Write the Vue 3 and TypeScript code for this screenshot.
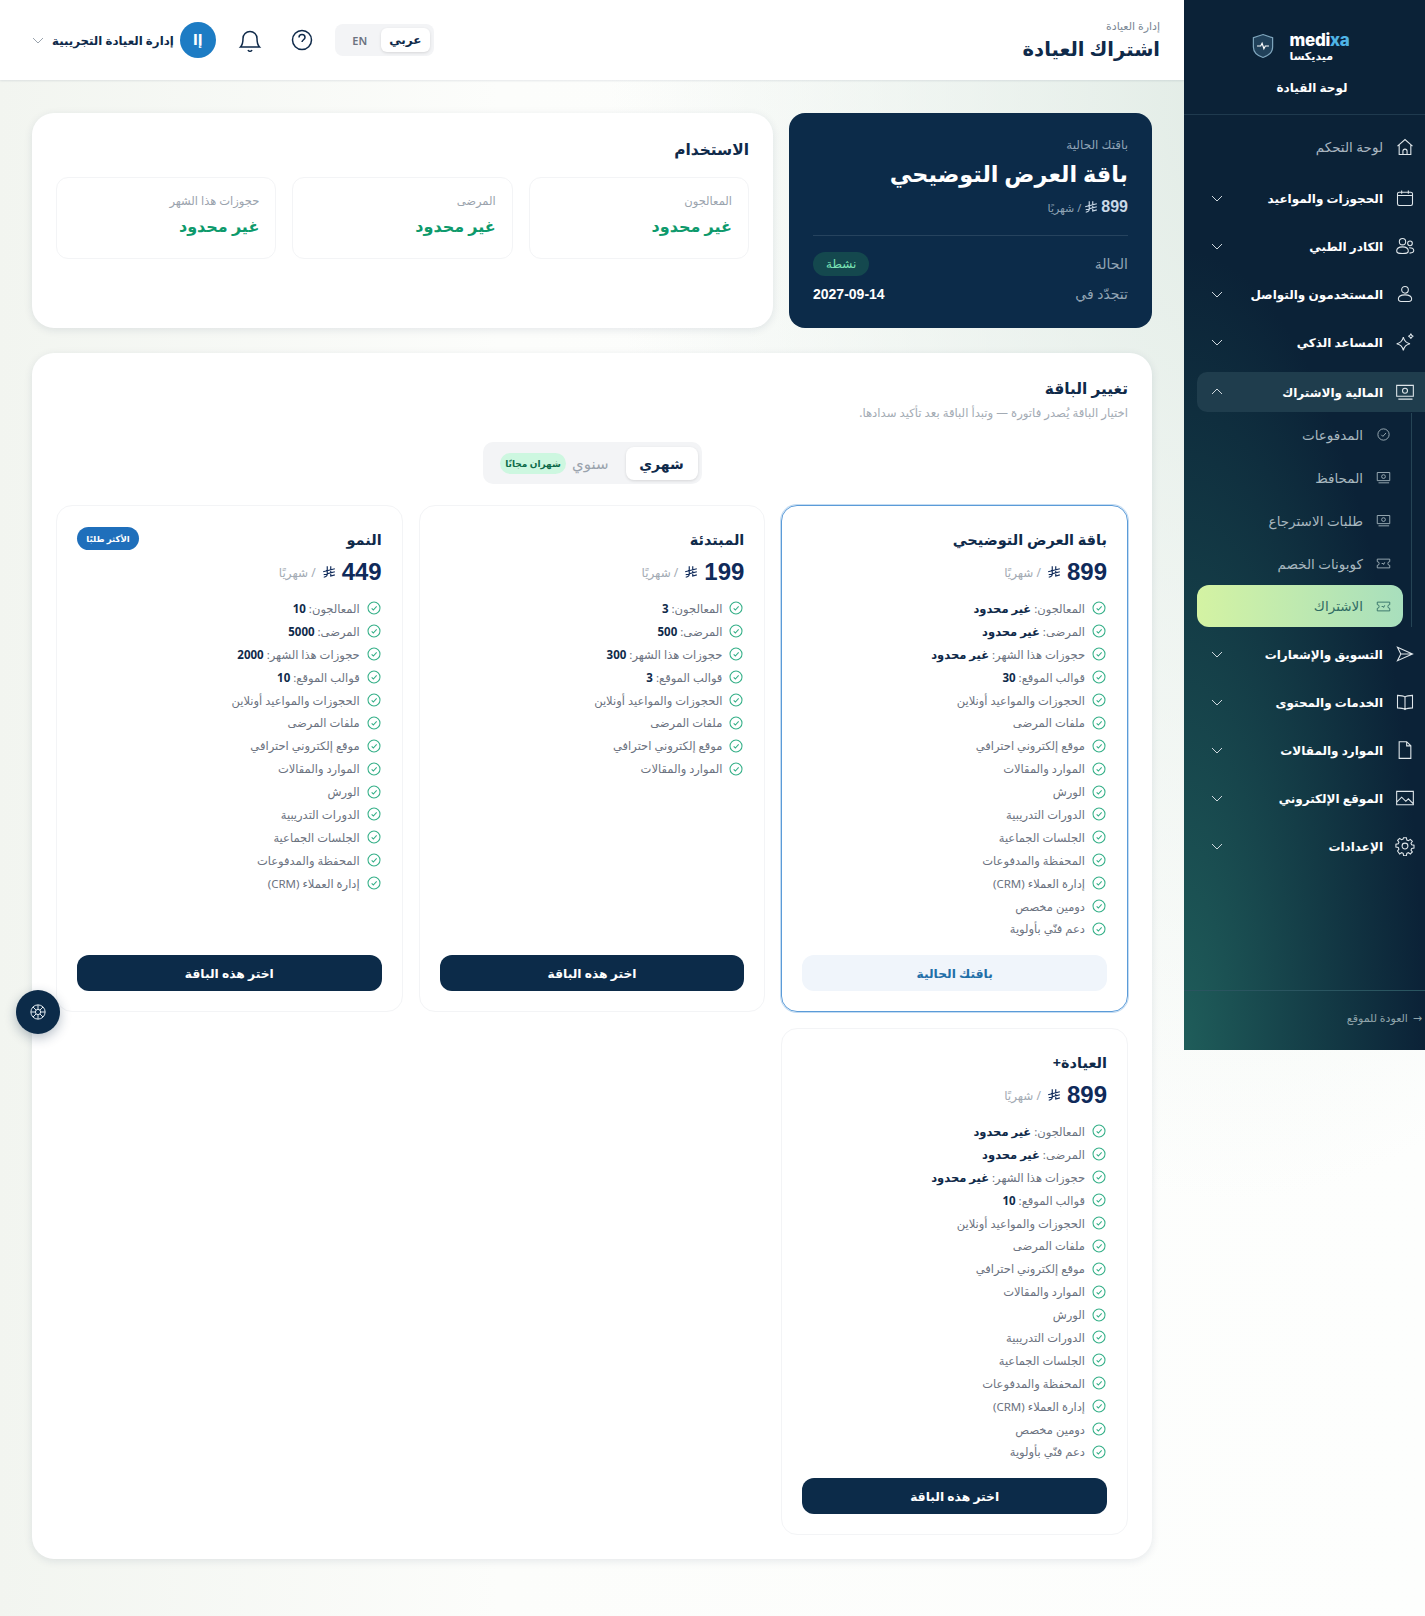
<script setup lang="ts">
import { computed } from "vue";

type NavItem = { label: string; icon: string; chevron?: boolean; plain?: boolean };

const icons: Record<string, string> = {
  home: "M3 11 12 3l9 8M5 9.500V21h14V9.500M9.500 21v-4a2.500 2.500 0 0 1 5 0v4",
  calendar: "M3 7a2 2 0 0 1 2-2h14a2 2 0 0 1 2 2v12a2 2 0 0 1-2 2H5a2 2 0 0 1-2-2zM3 9h18M8 3v4M16 3v4",
  team: "M9 3a3.800 3.800 0 1 1 0 7.600A3.800 3.800 0 0 1 9 3zM18 6a2.800 2.800 0 1 1 0 5.600A2.800 2.800 0 0 1 18 6zM2 18c0-3 3-5 7-5s7 2 7 5-3 3-7 3-7 0-7-3zM17 14c3 0 5.500 1.300 5.500 3.500S20 20.500 17.500 20.500",
  user: "M12 3a4 4 0 1 1 0 8 4 4 0 0 1 0-8zM4 18c0-3.500 3.500-5 8-5s8 1.500 8 5-3.500 3-8 3-8 .5-8-3z",
  spark: "M10 6c1 5 3 7 8 8-5 1-7 3-8 8-1-5-3-7-8-8 5-1 7-3 8-8zM19 2c.4 2 1 2.600 3 3-2 .4-2.600 1-3 3-.4-2-1-2.600-3-3 2-.4 2.600-1 3-3z",
  money: "M2 4h20v13H2zM12 7.500a3 3 0 1 1 0 6 3 3 0 0 1 0-6zM5.500 10.500h.01M18.500 10.500h.01M4 20.500h17",
  check: "M12 3a9 9 0 1 1 0 18 9 9 0 0 1 0-18zM8.500 12.500l2.500 2.500 5-5.500",
  ticket: "M2 5h20v4a3 3 0 0 0 0 6v4H2v-4a3 3 0 0 0 0-6zM9 12h3M14 10l-2 4",
  send: "M3 4l18 8-18 8 4-8zM7 12h14",
  book: "M12 6c-2-1.500-5-2-9-2v15c4 0 7 .5 9 2 2-1.500 5-2 9-2V4c-4 0-7 .5-9 2zM12 6v15",
  file: "M5 2h9l5 5v15H5zM14 2v5h5",
  image: "M2 4h20v16H2zM2 17l6-6 5 5 3-3 6 6M16 8h.01",
  gear: "M12 8.500a3.500 3.500 0 1 1 0 7 3.500 3.500 0 0 1 0-7zM10.300 2h3.400l.5 2.800 1.900.8 2.300-1.600 2.400 2.400-1.600 2.300.8 1.900 2.800.5v3.400l-2.800.5-.8 1.900 1.600 2.300-2.400 2.400-2.300-1.600-1.900.8-.5 2.800h-3.400l-.5-2.800-1.900-.8-2.300 1.600L3.100 18l1.600-2.300-.8-1.900-2.800-.5V9.900l2.800-.5.8-1.900L3.100 5.200 5.500 2.800l2.300 1.600 1.900-.8z",
};
const riyalPath = "M9 2v14c0 2.500-2 4.500-6 5M15 2v17l7-2M2 11.500l20-5M3 16.500l19-5";

const navTop: NavItem[] = [
  { label: "لوحة التحكم", icon: "home", plain: true },
  { label: "الحجوزات والمواعيد", icon: "calendar", chevron: true },
  { label: "الكادر الطبي", icon: "team", chevron: true },
  { label: "المستخدمون والتواصل", icon: "user", chevron: true },
  { label: "المساعد الذكي", icon: "spark", chevron: true },
];
const subNav = [
  { label: "المدفوعات", icon: "check" },
  { label: "المحافظ", icon: "money" },
  { label: "طلبات الاسترجاع", icon: "money" },
  { label: "كوبونات الخصم", icon: "ticket" },
  { label: "الاشتراك", icon: "ticket", active: true },
];
const navBottom: NavItem[] = [
  { label: "التسويق والإشعارات", icon: "send", chevron: true },
  { label: "الخدمات والمحتوى", icon: "book", chevron: true },
  { label: "الموارد والمقالات", icon: "file", chevron: true },
  { label: "الموقع الإلكتروني", icon: "image", chevron: true },
  { label: "الإعدادات", icon: "gear", chevron: true },
];

const usage = ["المعالجون", "المرضى", "حجوزات هذا الشهر"];

const base = [
  "الحجوزات والمواعيد أونلاين",
  "ملفات المرضى",
  "موقع إلكتروني احترافي",
  "الموارد والمقالات",
];
const more = ["الورش", "الدورات التدريبية", "الجلسات الجماعية", "المحفظة والمدفوعات", "إدارة العملاء (CRM)"];
const top = ["دومين مخصص", "دعم فنّي بأولوية"];

function limits(a: string, b: string, c: string, d: string) {
  return [
    { label: "المعالجون:", value: a },
    { label: "المرضى:", value: b },
    { label: "حجوزات هذا الشهر:", value: c },
    { label: "قوالب الموقع:", value: d },
  ];
}
const un = "غير محدود";
const plans = computed(() => [
  { name: "باقة العرض التوضيحي", price: 899, mine: true, limits: limits(un, un, un, "30"), features: [...base, ...more, ...top] },
  { name: "المبتدئة", price: 199, limits: limits("3", "500", "300", "3"), features: base },
  { name: "النمو", price: 449, popular: true, limits: limits("10", "5000", "2000", "10"), features: [...base, ...more] },
  { name: "العيادة+", price: 899, limits: limits(un, un, un, "10"), features: [...base, ...more, ...top] },
]);
</script>

<template>
  <div class="page" dir="rtl">
    <aside class="sidebar">
      <div class="brand">
        <div class="logo" dir="ltr">
          <svg class="shield" viewBox="0 0 24 28" width="22" height="26">
            <path d="M12 1.500 22.500 5v10c0 6-4.500 9.500-10.500 11.500C6 24.500 1.500 21 1.500 15V5z" fill="#21415a" stroke="#7fa6bd" stroke-width="1.300" />
            <path d="M5.500 14h4l1.500-3 2 6 1.500-3h4" fill="none" stroke="#fff" stroke-width="1.300" />
          </svg>
          <div class="logo-text">
            <div class="logo-en">medi<span>xa</span></div>
            <div class="logo-ar">ميديكسا</div>
          </div>
        </div>
        <div class="brand-title">لوحة القيادة</div>
      </div>

      <nav class="nav">
        <div v-for="item in navTop" :key="item.label" class="nav-item" :class="{ plain: item.plain }">
          <svg class="nav-icon" viewBox="0 0 24 24"><path :d="icons[item.icon]" /></svg>
          <span class="nav-label">{{ item.label }}</span>
          <svg v-if="item.chevron" class="chev" viewBox="0 0 12 12"><path d="M1 4l5 5 5-5" /></svg>
        </div>
        <div class="nav-item open">
          <svg class="nav-icon" viewBox="0 0 24 24"><path :d="icons.money" /></svg>
          <span class="nav-label">المالية والاشتراك</span>
          <svg class="chev" viewBox="0 0 12 12"><path d="M1 8l5-5 5 5" /></svg>
        </div>
        <div class="sub">
          <div v-for="s in subNav" :key="s.label" class="sub-item" :class="{ active: s.active }">
            <svg class="sub-icon" viewBox="0 0 24 24"><path :d="icons[s.icon]" /></svg>
            <span>{{ s.label }}</span>
          </div>
        </div>
        <div v-for="item in navBottom" :key="item.label" class="nav-item">
          <svg class="nav-icon" viewBox="0 0 24 24"><path :d="icons[item.icon]" /></svg>
          <span class="nav-label">{{ item.label }}</span>
          <svg v-if="item.chevron" class="chev" viewBox="0 0 12 12"><path d="M1 4l5 5 5-5" /></svg>
        </div>
      </nav>

      <div class="back"><span class="arrow">→</span> العودة للموقع</div>
    </aside>

    <div class="main">
      <header class="topbar">
        <div class="heading">
          <div class="crumb">إدارة العيادة</div>
          <h1>اشتراك العيادة</h1>
        </div>
        <div class="tools">
          <div class="lang">
            <span class="lang-on">عربي</span>
            <span class="lang-off">EN</span>
          </div>
          <svg class="tool help" viewBox="0 0 24 24"><path d="M12 2.500a9.500 9.500 0 1 1 0 19 9.500 9.500 0 0 1 0-19zM9 9.500a3 3 0 0 1 6 0c0 2-3 2.500-3 4.500M12 17h.01" /></svg>
          <svg class="tool bell" viewBox="0 0 24 24"><path d="M2.500 19c2-2 2.500-4 2.500-8.500a7 7 0 0 1 14 0c0 4.500.5 6.500 2.500 8.500zM10 22a2.200 2.200 0 0 0 4 0" /></svg>
          <div class="account">
            <span class="avatar">إا</span>
            <span class="account-name">إدارة العيادة التجريبية</span>
            <svg class="account-chev" viewBox="0 0 12 12"><path d="M1 4l5 5 5-5" /></svg>
          </div>
        </div>
      </header>

      <main class="content">
        <div class="top-row">
          <section class="now">
            <div class="cur-label">باقتك الحالية</div>
            <div class="cur-name">باقة العرض التوضيحي</div>
            <div class="cur-price">
              <b>899</b>
              <svg class="riyal" viewBox="0 0 24 24"><path :d="riyalPath" /></svg>
              <span>/ شهريًا</span>
            </div>
            <div class="cur-row first"><span>الحالة</span><em class="badge">نشطة</em></div>
            <div class="cur-row"><span>تتجدّد في</span><b>2027-09-14</b></div>
          </section>
          <section class="usage">
            <h2>الاستخدام</h2>
            <div class="usage-grid">
              <div v-for="u in usage" :key="u" class="usage-box">
                <div class="usage-label">{{ u }}</div>
                <div class="usage-value">غير محدود</div>
              </div>
            </div>
          </section>
        </div>

        <section class="change">
          <h2>تغيير الباقة</h2>
          <p class="hint">اختيار الباقة يُصدر فاتورة — وتبدأ الباقة بعد تأكيد سدادها.</p>
          <div class="period-wrap">
            <div class="period">
              <span class="period-on">شهري</span>
              <span class="period-off">سنوي</span>
              <span class="free">شهران مجانًا</span>
            </div>
          </div>
          <div class="plans">
            <article v-for="p in plans" :key="p.name" class="plan" :class="{ mine: p.mine }">
              <span v-if="p.popular" class="popular">الأكثر طلبًا</span>
              <h3>{{ p.name }}</h3>
              <div class="price">
                <b>{{ p.price }}</b>
                <svg class="riyal" viewBox="0 0 24 24"><path :d="riyalPath" /></svg>
                <span>/ شهريًا</span>
              </div>
              <ul>
                <li v-for="l in p.limits" :key="l.label">
                  <svg class="tick" viewBox="0 0 24 24"><path :d="icons.check" /></svg>
                  <span>{{ l.label }} <b>{{ l.value }}</b></span>
                </li>
                <li v-for="f in p.features" :key="f">
                  <svg class="tick" viewBox="0 0 24 24"><path :d="icons.check" /></svg>
                  <span>{{ f }}</span>
                </li>
              </ul>
              <button :class="{ 'is-current': p.mine }">{{ p.mine ? "باقتك الحالية" : "اختر هذه الباقة" }}</button>
            </article>
          </div>
        </section>
      </main>
    </div>

    <div class="fab">
      <svg viewBox="0 0 24 24"><path d="M12 2.500a9.500 9.500 0 1 1 0 19 9.500 9.500 0 0 1 0-19zM12 8.500a3.500 3.500 0 1 1 0 7 3.500 3.500 0 0 1 0-7zM12 2.500v6M12 15.500v6M2.500 12h6M15.500 12h6M5.300 5.300l4.200 4.200M14.500 14.500l4.200 4.200M18.700 5.300l-4.200 4.200M9.500 14.500l-4.200 4.200" /></svg>
    </div>
  </div>
</template>

<style>
html,
body {
  margin: 0;
  padding: 0;
}
</style>

<style scoped>
* {
  box-sizing: border-box;
}
.page {
  position: relative;
  display: flex;
  align-items: flex-start;
  width: 1425px;
  height: 1616px;
  overflow: hidden;
  background:
    radial-gradient(ellipse 620px 1100px at 1230px 100px, #e2ece6 0%, rgba(226, 236, 230, 0) 100%),
    linear-gradient(90deg, #f2f5f0 0%, #fcfdfb 35%, #fdfefd 100%);
  font-family: "Noto Sans", "DejaVu Sans", sans-serif;
  color: #0f2a4a;
}

.sidebar {
  flex: 0 0 241px;
  height: 1050px;
  display: flex;
  flex-direction: column;
  background:
    radial-gradient(ellipse 240px 800px at 0 100%, #1f5d5a 0%, rgba(31, 93, 90, 0) 100%),
    #0b2237;
  color: #fff;
}
.brand {
  height: 115px;
  padding-top: 33px;
  border-bottom: 1px solid #1f3a4e;
  text-align: center;
}
.logo {
  display: flex;
  justify-content: center;
  gap: 16px;
  align-items: flex-start;
  padding-right: 8px;
}
.logo-en {
  font: 800 17px/15px "Inter", sans-serif;
  letter-spacing: -0.3px;
}
.logo-en span {
  color: #4fb4e6;
}
.logo-ar {
  margin-top: 2px;
  font-size: 11px;
  line-height: 12px;
  font-weight: 600;
  text-align: left;
}
.brand-title {
  margin-top: 17px;
  padding-left: 15px;
  font-size: 12px;
  font-weight: 700;
}
.nav {
  padding-top: 8px;
  flex: 1;
}
.nav-item {
  height: 48px;
  display: flex;
  align-items: center;
  padding: 0 10px 0 12px;
  gap: 12px;
  font-size: 12px;
  font-weight: 700;
}
.nav-item.plain {
  margin-bottom: 3px;
  font-size: 13.500px;
  font-weight: 400;
  color: #a9b6c0;
}
.nav-item.open {
  width: 228px;
  height: 40px;
  margin: 6px 0 1px auto;
  padding-left: 0;
  background: #1f3d4d;
  border-radius: 10px 0 0 10px;
}
.nav-item.open .chev {
  margin-left: 14px;
}
.nav-icon {
  width: 20px;
  height: 20px;
  flex: none;
  fill: none;
  stroke: #dfe6ea;
  stroke-width: 1.300;
}
.nav-label {
  flex: 1;
}
.chev {
  width: 12px;
  height: 12px;
  margin-left: 15px;
  fill: none;
  stroke: #cfd8de;
  stroke-width: 1;
}
.sub {
  width: 215px;
  margin: 0 13px 3px 13px;
  border-right: 1px solid #254455;
}
.sub-item {
  height: 43px;
  display: flex;
  align-items: center;
  gap: 13px;
  margin-right: 8px;
  padding-right: 12px;
  font-size: 13.500px;
  color: #a7b7bf;
}
.sub-item.active {
  width: 206px;
  height: 42px;
  border-radius: 12px;
  background: linear-gradient(90deg, #d4f3a3 0%, #a8dfbd 100%);
  color: #2f6b63;
}
.sub-icon {
  width: 15px;
  height: 15px;
  flex: none;
  fill: none;
  stroke: currentColor;
  stroke-width: 1.400;
}
.back {
  height: 60px;
  border-top: 1px solid #2a5560;
  padding: 19px 3px 0 0;
  font-size: 11px;
  color: #8fa4aa;
}
.arrow {
  margin-left: 2px;
}

.main {
  flex: 1;
  min-width: 0;
}
.topbar {
  height: 80px;
  display: flex;
  align-items: center;
  justify-content: space-between;
  padding: 0 24px 0 32px;
  background: #fff;
  box-shadow: 0 1px 2px rgba(15, 42, 74, 0.1);
}
.crumb {
  font-size: 11px;
  color: #7a8794;
}
h1 {
  margin: 2px 0 0;
  font-size: 19.500px;
  font-weight: 700;
}
.tools {
  display: flex;
  align-items: center;
}
.lang {
  display: flex;
  align-items: center;
  width: 99px;
  height: 32px;
  padding: 4px;
  border-radius: 8px;
  background: #f3f4f6;
  font-size: 12px;
}
.lang-on {
  width: 49px;
  height: 24px;
  line-height: 24px;
  text-align: center;
  background: #fff;
  border-radius: 6px;
  box-shadow: 0 1px 3px rgba(0, 0, 0, 0.12);
  font-weight: 600;
}
.lang-off {
  flex: 1;
  text-align: center;
  color: #6b7280;
  font-weight: 600;
  font-size: 11px;
}
.tool {
  width: 24px;
  height: 24px;
  fill: none;
  stroke: #0f2a4a;
  stroke-width: 1.500;
}
.tool.help {
  margin-right: 21px;
}
.tool.bell {
  margin-right: 28px;
}
.account {
  display: flex;
  align-items: center;
  gap: 6px;
  margin-right: 22px;
}
.avatar {
  width: 36px;
  height: 36px;
  border-radius: 50%;
  background: #1d7cc4;
  color: #fff;
  text-align: center;
  line-height: 36px;
  font-size: 14px;
  font-weight: 700;
}
.account-name {
  font-size: 11.800px;
  font-weight: 700;
}
.account-chev {
  width: 12px;
  height: 12px;
  margin-right: 2px;
  fill: none;
  stroke: #9aa3ad;
}

.content {
  padding: 33px 32px 0;
}
.top-row {
  display: grid;
  grid-template-columns: 363px 1fr;
  gap: 16px;
}
.now {
  height: 215px;
  padding: 23px 24px 24px;
  border-radius: 16px;
  background: #0c2b49;
  color: #fff;
}
.cur-label {
  font-size: 12px;
  color: #8fa3b5;
}
.cur-name {
  margin-top: 5px;
  font-size: 22.400px;
  font-weight: 700;
}
.cur-price {
  display: flex;
  align-items: center;
  gap: 3px;
  margin-top: 9px;
  padding-bottom: 19px;
  border-bottom: 1px solid #26435e;
  font-size: 11px;
  color: #8fa3b5;
}
.cur-price b {
  font: 700 16px "Liberation Sans", sans-serif;
  color: #c9d8e6;
}
.cur-price .riyal {
  width: 14px;
  height: 14px;
  stroke: #c9d8e6;
}
.cur-row {
  display: flex;
  justify-content: space-between;
  align-items: center;
  margin-top: 9px;
  height: 21px;
  font-size: 14px;
  color: #93a5b5;
}
.cur-row.first {
  margin-top: 17px;
}
.cur-row b {
  font: 700 14px "Liberation Sans", sans-serif;
  color: #fff;
}
.badge {
  padding: 3px 13px;
  font-size: 12px;
  line-height: 18px;
  font-style: normal;
  border-radius: 12px;
  background: #14484e;
  color: #7be3b5;
}
.usage {
  height: 215px;
  padding: 26px 24px 24px;
  border-radius: 22px;
  background: #fff;
  box-shadow: 0 2px 8px rgba(15, 42, 74, 0.1);
}
h2 {
  margin: 0;
  font-size: 15.400px;
  font-weight: 700;
}
.usage-grid {
  display: grid;
  grid-template-columns: repeat(3, 1fr);
  gap: 16px;
  margin-top: 17px;
}
.usage-box {
  height: 82px;
  padding: 15px 16px;
  border: 1px solid #f3f4f6;
  border-radius: 12px;
}
.usage-label {
  font-size: 11.500px;
  color: #9aa3ad;
}
.usage-value {
  margin-top: 7px;
  font-size: 16px;
  font-weight: 700;
  color: #0e9a6c;
}

.change {
  margin-top: 25px;
  padding: 25px 24px 24px;
  border-radius: 22px;
  background: #fff;
  box-shadow: 0 2px 8px rgba(15, 42, 74, 0.1);
}
.hint {
  margin: 5px 0 0;
  font-size: 11.700px;
  color: #a3abb4;
}
.period-wrap {
  display: flex;
  justify-content: center;
  margin-top: 22px;
}
.period {
  display: flex;
  align-items: center;
  width: 219px;
  height: 42px;
  padding: 4px;
  border-radius: 10px;
  background: #f3f4f6;
}
.period-on {
  width: 72px;
  height: 33px;
  line-height: 33px;
  text-align: center;
  background: #fff;
  border-radius: 8px;
  font-size: 14px;
  font-weight: 700;
  box-shadow: 0 1px 3px rgba(0, 0, 0, 0.12);
}
.period-off {
  margin-right: 17px;
  font-size: 15px;
  color: #9aa3ad;
}
.free {
  margin-right: 6px;
  padding: 4px 5px;
  border-radius: 12px;
  background: #cdf7e0;
  color: #0d6b4a;
  font-size: 9px;
  font-weight: 700;
}
.plans {
  display: grid;
  grid-template-columns: repeat(3, 1fr);
  gap: 16px;
  margin-top: 21px;
}
.plan {
  position: relative;
  display: flex;
  flex-direction: column;
  height: 507px;
  padding: 20px;
  border: 1px solid #f3f4f6;
  border-radius: 16px;
}
.plan.mine {
  border: 1px solid #5b9bd8;
  box-shadow: 0 0 0 1px #c4dcf2;
}
.popular {
  position: absolute;
  top: 21px;
  left: 20px;
  width: 62px;
  height: 23px;
  line-height: 23px;
  text-align: center;
  border-radius: 12px;
  background: #1f6fbb;
  color: #fff;
  font-size: 8.500px;
  font-weight: 700;
}
h3 {
  margin: 3px 0 0;
  font-size: 14.500px;
  font-weight: 700;
}
.price {
  display: flex;
  align-items: center;
  gap: 6px;
  margin-top: 9px;
  font-size: 12px;
  color: #a3abb4;
}
.price b {
  font: 700 24px "Liberation Sans", sans-serif;
  color: #0f2a5a;
}
.riyal {
  width: 14px;
  height: 14px;
  fill: none;
  stroke: #0f2a5a;
  stroke-width: 2;
}
ul {
  list-style: none;
  margin: 11px 0 0;
  padding: 0;
  flex: 1;
}
li {
  display: flex;
  align-items: center;
  gap: 6px;
  height: 22.900px;
  font-size: 11.500px;
  color: #6b7280;
}
li b {
  color: #0f2a4a;
  font-weight: 700;
}
.tick {
  width: 16px;
  height: 16px;
  flex: none;
  fill: none;
  stroke: #35b088;
  stroke-width: 1.600;
}
button {
  height: 36px;
  border: 0;
  border-radius: 12px;
  background: #0c2b49;
  color: #fff;
  font: 700 12.300px "Noto Sans", "DejaVu Sans", sans-serif;
}
button.is-current {
  background: #f0f5fb;
  color: #1f6fa8;
}
.fab {
  position: absolute;
  left: 16px;
  top: 990px;
  width: 44px;
  height: 44px;
  border-radius: 50%;
  background: #0c2b49;
  box-shadow: 0 4px 12px rgba(15, 42, 74, 0.3);
  display: flex;
  align-items: center;
  justify-content: center;
}
.fab svg {
  width: 18px;
  height: 18px;
  fill: none;
  stroke: #e5edf3;
  stroke-width: 1.300;
}
</style>
